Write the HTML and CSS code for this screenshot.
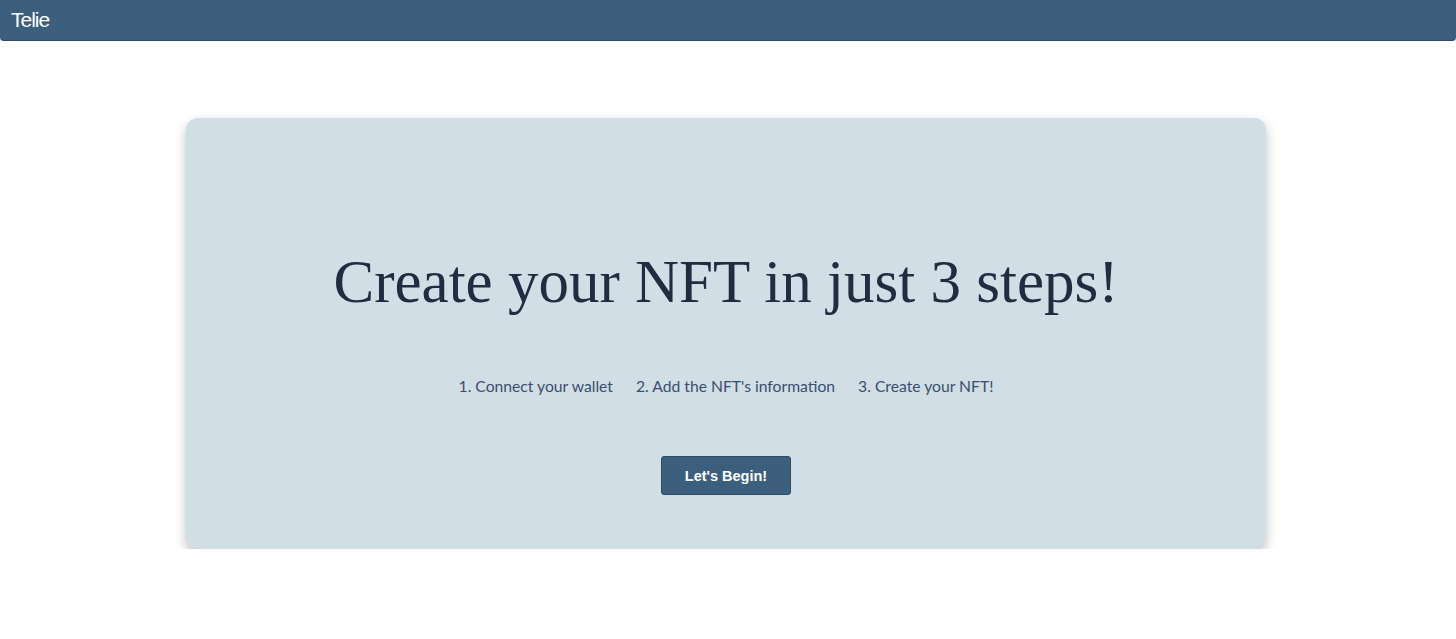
FILE: index.html
```html
<!DOCTYPE html>
<html lang="en">
<head>
    <meta charset="UTF-8">
    <meta name="viewport" content="width=device-width, initial-scale=1.0">
    <title>Telie</title>
    <link rel="stylesheet" href="styles.css">
</head>
<body>
    <div class="navbar">
        <span class="brand">Telie</span>
    </div>

    <div class="main">
        <div class="card">
            <h1 class="title">Create your NFT in just 3 steps!</h1>
            <div class="steps">
                <span>1. Connect your wallet</span>
                <span>2. Add the NFT's information</span>
                <span>3. Create your NFT!</span>
            </div>
            <button class="begin">Let's Begin!</button>
        </div>
    </div>
</body>
</html>
```

FILE: styles.css
```css
body {
    margin: 0;
    background-color: #fff;
    font-family: "Liberation Serif", serif;
}

.navbar {
    height: 40px;
    background-color: #3b5f7d;
    border-bottom: 1px solid #2c4c68;
    border-radius: 0 0 4px 4px;
    display: flex;
    align-items: center;
    padding-left: 11px;
}

.brand {
    font-family: "Liberation Sans", Arial, sans-serif;
    font-size: 21px;
    color: #fff;
    letter-spacing: -1px;
}

.main {
    padding: 77px 4px 0 0;
}

.card {
    width: 1080px;
    height: 431px;
    margin: 0 auto;
    box-sizing: border-box;
    background-color: #d1dee6;
    border-radius: 12px;
    box-shadow: 0 5px 12px rgba(0, 0, 0, 0.25);
    display: flex;
    flex-direction: column;
    align-items: center;
    padding-top: 124px;
}

.title {
    margin: 0;
    font-family: "Liberation Serif", "Times New Roman", serif;
    font-weight: normal;
    font-size: 61px;
    line-height: 80px;
    color: #232b40;
}

.steps {
    margin-top: 55px;
    display: flex;
    gap: 23px;
    font-family: Lato, sans-serif;
    font-size: 15.7px;
    color: #3a4f6e;
}

.begin {
    margin-top: 61px;
    width: 130px;
    height: 39px;
    background-color: #3b5f7d;
    border: 1px solid #2c4c68;
    border-radius: 3px;
    color: #fff;
    font-family: "Liberation Sans", Arial, sans-serif;
    font-weight: bold;
    font-size: 14.5px;
}
```
